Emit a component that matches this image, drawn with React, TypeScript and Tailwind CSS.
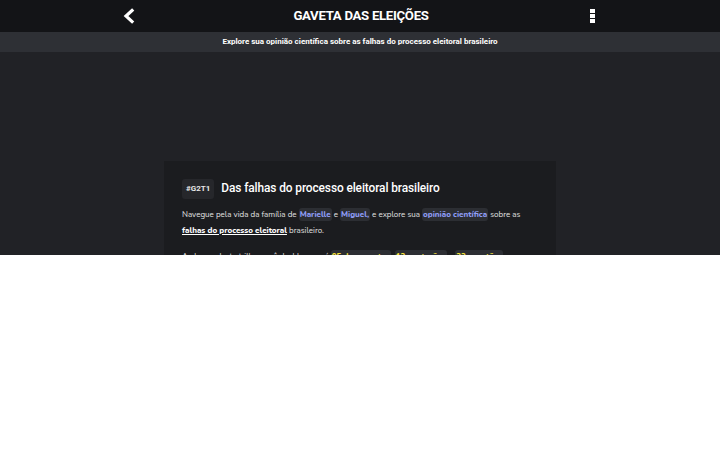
import React from "react";

const Chip = ({ children, tone }: { children: React.ReactNode; tone: "blue" | "yellow" }) => (
  <span
    className={
      "rounded-[3px] bg-[#2c2e33] px-[1px] py-[1px] font-extrabold " +
      (tone === "blue" ? "text-[#8e9cf5]" : "text-[#f5e23c]")
    }
  >
    {children}
  </span>
);

export default function App() {
  return (
    <div className="h-[255px] overflow-hidden bg-[#212226] font-['Nunito','Lato',sans-serif]">
      {/* Top bar */}
      <header className="flex h-[32px] items-center justify-between bg-[#131417] px-[118px]">
        <svg width="16" height="16" viewBox="0 0 16 16" className="ml-[3px]">
          <path d="M11 2.5 L5 8 L11 13.5" stroke="white" strokeWidth="3.2" fill="none" strokeLinecap="square" strokeLinejoin="miter" />
        </svg>
        <h1 className="-ml-[5px] font-['Roboto',sans-serif] text-[13.2px] font-bold tracking-[-0.3px] text-white">
          GAVETA DAS ELEIÇÕES
        </h1>
        <div className="mr-[7px] flex flex-col gap-[1px]">
          <span className="h-[4px] w-[5px] bg-white" />
          <span className="h-[4px] w-[5px] bg-white" />
          <span className="h-[4px] w-[5px] bg-white" />
        </div>
      </header>

      {/* Subtitle bar */}
      <div className="flex h-[20px] items-center justify-center bg-[#2e3035] font-['Roboto',sans-serif] text-[8px] font-bold text-white">
        Explore sua opinião científica sobre as falhas do processo eleitoral brasileiro
      </div>

      {/* Card */}
      <main className="flex justify-center pt-[109px]">
        <section className="w-[392px] bg-[#1b1c1f] px-[18px] pt-[18px] pb-6">
          <div className="flex items-center gap-[7px]">
            <span className="rounded-[3px] bg-[#26272b] px-[4px] py-[4px] font-['Roboto',sans-serif] text-[8px] font-bold text-[#e8e8e8]">
              #G2T1
            </span>
            <h2 className="font-['Roboto',sans-serif] text-[11.9px] font-medium tracking-[-0.1px] text-white">
              Das falhas do processo eleitoral brasileiro
            </h2>
          </div>

          <p className="mt-[8px] text-[8px] leading-[16px] text-[#e2e2e2]">
            Navegue pela vida da família de <Chip tone="blue">Marielle</Chip> e{" "}
            <Chip tone="blue">Miguel,</Chip> e explore sua <Chip tone="blue">opinião científica</Chip> sobre as{" "}
            <span className="font-extrabold text-white underline">falhas do processo eleitoral</span> brasileiro.
          </p>

          <p className="mt-[10px] text-[8px] leading-[16px] text-[#e2e2e2]">
            Ao longo desta trilha, você desbloqueará <Chip tone="yellow">05 documentos</Chip>,{" "}
            <Chip tone="yellow">12 anotações</Chip> e <Chip tone="yellow">33 questões</Chip>.
          </p>
        </section>
      </main>
    </div>
  );
}
